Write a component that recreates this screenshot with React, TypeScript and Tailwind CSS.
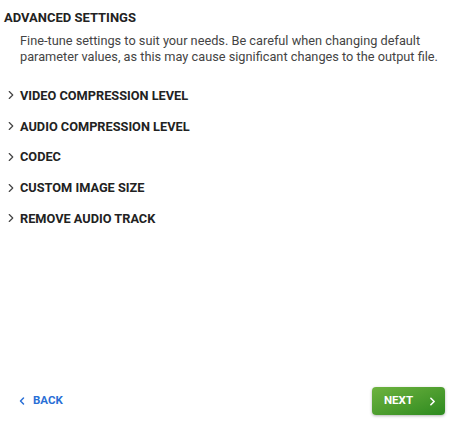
import { ChevronLeft, ChevronRight } from 'lucide-react'

const sections = [
  'VIDEO COMPRESSION LEVEL',
  'AUDIO COMPRESSION LEVEL',
  'CODEC',
  'CUSTOM IMAGE SIZE',
  'REMOVE AUDIO TRACK',
]

export default function App() {
  return (
    <div className="flex h-[425px] w-[464px] flex-col bg-white font-['Roboto',sans-serif] text-[#222]">
      <div className="flex-1 px-[4px] pt-[10px]">
        <h1 className="text-[13px] font-bold leading-[16px] text-[#222]">ADVANCED SETTINGS</h1>
        <p className="mt-[7px] pl-[16px] text-[12.75px] leading-[16px] text-[#444]">
          Fine-tune settings to suit your needs. Be careful when changing default parameter values, as this may cause
          significant changes to the output file.
        </p>

        <div className="mt-[15px] flex flex-col">
          {sections.map((s) => (
            <button key={s} className="flex h-[30.75px] items-center gap-[2px] text-left">
              <ChevronRight className="h-[14px] w-[14px] text-[#444]" strokeWidth={2} />
              <span className="text-[12.75px] font-bold text-[#222]">{s}</span>
            </button>
          ))}
        </div>
      </div>

      <div className="flex items-center justify-between pb-[10px] pl-[16px] pr-[19px]">
        <button className="flex items-center gap-[5px] text-[11.5px] font-bold text-[#2a6fd6]">
          <ChevronLeft className="h-[12px] w-[12px]" strokeWidth={3} />
          BACK
        </button>
        <button className="flex h-[28px] w-[73px] items-center justify-between rounded-[4px] bg-gradient-to-br from-[#6db33f] to-[#2b8a1f] pl-[12px] pr-[6px] text-[11.5px] font-bold text-white shadow-[0_1px_3px_rgba(0,0,0,0.3)]">
          NEXT
          <ChevronRight className="h-[13px] w-[13px]" strokeWidth={3} />
        </button>
      </div>
    </div>
  )
}
